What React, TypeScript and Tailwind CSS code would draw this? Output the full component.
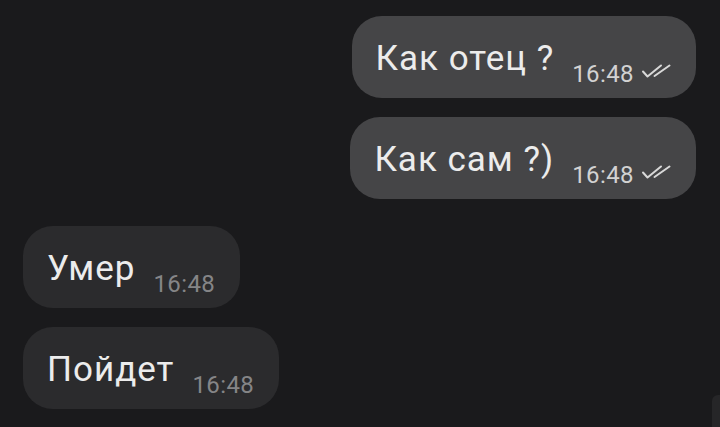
const ReadChecks = () => (
  <svg width="30" height="14" viewBox="0 0 30 14" fill="none" className="shrink-0">
    <path d="M2 7.5 L6.5 12.5 L20 1.5" stroke="#d8d8d8" strokeWidth="2" strokeLinecap="round" strokeLinejoin="round" />
    <path d="M13.5 12 L28.5 1.5" stroke="#d8d8d8" strokeWidth="2" strokeLinecap="round" />
  </svg>
);

type MsgProps = { text: string; time: string; out?: boolean };

const Bubble = ({ text, time, out }: MsgProps) => (
  <div
    className={`flex items-start h-[82px] rounded-[30px] pl-[24px] pr-[25px] ${
      out ? "self-end bg-[#454547]" : "self-start bg-[#2b2b2d]"
    }`}
  >
    <span className="mt-[25px] text-[35px] leading-none tracking-[1px] text-[#ececec] whitespace-nowrap">{text}</span>
    <span
      className={`mt-[46px] ml-[18px] text-[24px] leading-none tracking-[0.4px] whitespace-nowrap ${
        out ? "text-[#d2d2d2]" : "text-[#858587]"
      }`}
    >
      {time}
    </span>
    {out && (
      <span className="mt-[48px] ml-[7px]">
        <ReadChecks />
      </span>
    )}
  </div>
);

export default function App() {
  return (
    <div className="relative w-[720px] h-[427px] overflow-hidden bg-[#1a1a1c] font-['Roboto',sans-serif]">
      <div className="flex flex-col pt-[16px] pr-[24px] pl-[23px]">
        <Bubble text="Как отец ?" time="16:48" out />
        <div className="h-[19px]" />
        <Bubble text="Как сам ?)" time="16:48" out />
        <div className="h-[27px]" />
        <Bubble text="Умер" time="16:48" />
        <div className="h-[19px]" />
        <Bubble text="Пойдет" time="16:48" />
      </div>
      <div className="absolute left-[712px] top-[395px] w-[20px] h-[60px] rounded-tl-[6px] bg-[#262628]" />
    </div>
  );
}
